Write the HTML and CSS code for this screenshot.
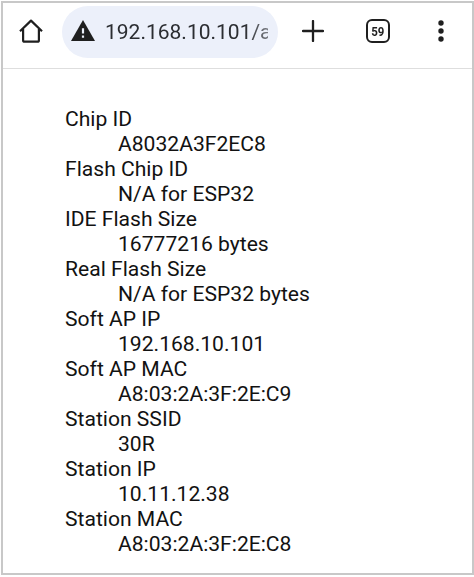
FILE: index.html
```
<!DOCTYPE html>
<html lang="en">
<head>
    <meta charset="UTF-8">
    <meta name="viewport" content="width=device-width, initial-scale=1.0">
    <title>ESP32 Info</title>
    <link rel="stylesheet" href="styles.css">
</head>
<body>
    <div class="screen">
        <header class="toolbar">
            <svg class="home" width="24" height="24" viewBox="0 0 24 24">
                <path d="M1 12.2L12 1.6L23 12.2M4.1 10V21.2Q4.1 22.7 5.6 22.7H18.4Q19.9 22.7 19.9 21.2V10" fill="none" stroke="#1f1f1f" stroke-width="2.2" stroke-linejoin="round"/>
            </svg>
            <div class="address-bar">
                <svg class="warning" width="24" height="21" viewBox="0 0 24 21">
                    <path d="M12 0L24 21H0Z" fill="#1f1f1f"/>
                    <path d="M12 8.2V13.4M12 15.4V17.8" stroke="#ecf0fa" stroke-width="2.2"/>
                </svg>
                <span class="url">192.168.10.101/a</span>
            </div>
            <svg class="plus" width="22" height="22" viewBox="0 0 22 22">
                <path d="M11 1V21M1 11H21" stroke="#1f1f1f" stroke-width="2.3" stroke-linecap="round"/>
            </svg>
            <div class="tabs"><span class="tab-count">59</span></div>
            <svg class="menu" width="6" height="22" viewBox="0 0 6 22">
                <g fill="#1f1f1f">
                    <circle cx="3" cy="3" r="2.7"/>
                    <circle cx="3" cy="11" r="2.7"/>
                    <circle cx="3" cy="19" r="2.7"/>
                </g>
            </svg>
        </header>
        <dl class="info">
            <dt>Chip ID</dt>
            <dd>A8032A3F2EC8</dd>
            <dt>Flash Chip ID</dt>
            <dd>N/A for ESP32</dd>
            <dt>IDE Flash Size</dt>
            <dd>16777216 bytes</dd>
            <dt>Real Flash Size</dt>
            <dd>N/A for ESP32 bytes</dd>
            <dt>Soft AP IP</dt>
            <dd>192.168.10.101</dd>
            <dt>Soft AP MAC</dt>
            <dd>A8:03:2A:3F:2E:C9</dd>
            <dt>Station SSID</dt>
            <dd>30R</dd>
            <dt>Station IP</dt>
            <dd>10.11.12.38</dd>
            <dt>Station MAC</dt>
            <dd>A8:03:2A:3F:2E:C8</dd>
        </dl>
    </div>
</body>
</html>
```

FILE: styles.css
```
* {
    box-sizing: border-box;
}
body {
    margin: 0;
    padding: 1px 0 2px 1px;
    height: 577px;
    overflow: hidden;
    background: #fff;
    color: #121212;
    font-family: Roboto, "Liberation Sans", sans-serif;
}
.screen {
    width: 473px;
    height: 574px;
    border: 2px solid #c8c8c8;
}
.toolbar {
    display: flex;
    align-items: center;
    height: 66px;
    padding: 0 27px 9px 16px;
    border-bottom: 1px solid #dedede;
}
.toolbar svg {
    display: block;
    flex: none;
}
.address-bar {
    display: flex;
    align-items: center;
    width: 216px;
    height: 52px;
    margin: 2px 0 0 19px;
    padding-left: 9px;
    border-radius: 26px;
    background: #ecf0fa;
}
.warning {
    margin-bottom: 3px;
}
.url {
    width: 163px;
    margin-left: 10px;
    overflow: hidden;
    white-space: nowrap;
    font-size: 21px;
    line-height: 30px;
    color: #2b2d31;
    -webkit-mask-image: linear-gradient(to right, #000 140px, rgba(0, 0, 0, 0.6) 163px);
    mask-image: linear-gradient(to right, #000 140px, rgba(0, 0, 0, 0.6) 163px);
}
.plus {
    margin-left: 24px;
}
.tabs {
    width: 24px;
    height: 24px;
    margin-left: 42px;
    border: 2px solid #1f1f1f;
    border-radius: 6px;
    font-size: 13.5px;
    font-weight: 700;
    line-height: 20px;
    text-align: center;
    color: #1f1f1f;
}
.tab-count {
    display: inline-block;
    transform: scaleX(0.85);
}
.menu {
    margin-left: 48px;
}
.info {
    margin: 0;
    padding: 37px 0 0 62px;
    font-size: 21.1px;
    line-height: 25px;
}
.info dd {
    margin-left: 53px;
}
```
